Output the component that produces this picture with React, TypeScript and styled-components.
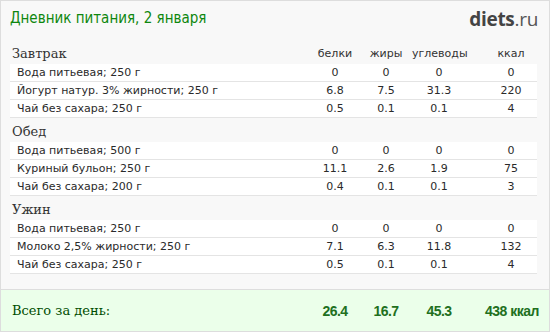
import styled, { createGlobalStyle } from 'styled-components';

const GlobalStyle = createGlobalStyle`
  body {
    margin: 0;
    background: #ffffff;
  }
`;

interface Food {
  name: string;
  protein: string;
  fat: string;
  carbs: string;
  kcal: string;
}

interface Meal {
  title: string;
  items: Food[];
}

const meals: Meal[] = [
  {
    title: 'Завтрак',
    items: [
      { name: 'Вода питьевая; 250 г', protein: '0', fat: '0', carbs: '0', kcal: '0' },
      { name: 'Йогурт натур. 3% жирности; 250 г', protein: '6.8', fat: '7.5', carbs: '31.3', kcal: '220' },
      { name: 'Чай без сахара; 250 г', protein: '0.5', fat: '0.1', carbs: '0.1', kcal: '4' },
    ],
  },
  {
    title: 'Обед',
    items: [
      { name: 'Вода питьевая; 500 г', protein: '0', fat: '0', carbs: '0', kcal: '0' },
      { name: 'Куриный бульон; 250 г', protein: '11.1', fat: '2.6', carbs: '1.9', kcal: '75' },
      { name: 'Чай без сахара; 200 г', protein: '0.4', fat: '0.1', carbs: '0.1', kcal: '3' },
    ],
  },
  {
    title: 'Ужин',
    items: [
      { name: 'Вода питьевая; 250 г', protein: '0', fat: '0', carbs: '0', kcal: '0' },
      { name: 'Молоко 2,5% жирности; 250 г', protein: '7.1', fat: '6.3', carbs: '11.8', kcal: '132' },
      { name: 'Чай без сахара; 250 г', protein: '0.5', fat: '0.1', carbs: '0.1', kcal: '4' },
    ],
  },
];

function App() {
  return (
    <>
      <GlobalStyle />
      <Diary>
        <Header>
          <Title>Дневник питания, 2 января</Title>
          <Logo>
            <b>diets</b>.ru
          </Logo>
        </Header>

        {meals.map((meal, i) => (
          <Section key={meal.title}>
            <SectionHead>
              <MealTitle>{meal.title}</MealTitle>
              {i === 0 && (
                <>
                  <ColLabel>белки</ColLabel>
                  <ColLabel>жиры</ColLabel>
                  <ColLabel>углеводы</ColLabel>
                  <ColLabel $last>ккал</ColLabel>
                </>
              )}
            </SectionHead>
            {meal.items.map((item) => (
              <Row key={item.name}>
                <FoodName>{item.name}</FoodName>
                <Value>{item.protein}</Value>
                <Value>{item.fat}</Value>
                <Value>{item.carbs}</Value>
                <Value $last>{item.kcal}</Value>
              </Row>
            ))}
          </Section>
        ))}

        <Totals>
          <TotalsInner>
            <TotalsLabel>Всего за день:</TotalsLabel>
            <TotalValue>26.4</TotalValue>
            <TotalValue>16.7</TotalValue>
            <TotalValue>45.3</TotalValue>
            <TotalValue $last>438 ккал</TotalValue>
          </TotalsInner>
        </Totals>
      </Diary>
    </>
  );
}

const columns = '1fr 50px 52px 54px 71px';

const Diary = styled.div`
  width: 550px;
  height: 332px;
  box-sizing: border-box;
  border: 1px solid #dddddd;
  background: #f8f8f8;
  display: flex;
  flex-direction: column;
  font-family: 'DejaVu Sans', Verdana, sans-serif;
`;

const Header = styled.div`
  height: 39px;
  padding: 0 11px 0 9px;
  display: flex;
  justify-content: space-between;
  align-items: flex-start;
`;

const Title = styled.div`
  margin-top: 8px;
  font-family: 'DejaVu Sans Condensed', 'DejaVu Sans', sans-serif;
  font-size: 15px;
  color: #0e870e;
`;

const Logo = styled.div`
  margin-top: 5px;
  font-family: 'Open Sans', sans-serif;
  font-size: 19px;
  color: #555555;
  letter-spacing: -0.3px;

  b {
    font-weight: 700;
    color: #444444;
  }
`;

const Section = styled.div`
  padding: 0 12px 0 9px;
`;

const SectionHead = styled.div`
  height: 24px;
  display: grid;
  grid-template-columns: ${columns};
  align-items: end;
  padding-bottom: 3px;
  box-sizing: border-box;
`;

const MealTitle = styled.div`
  padding-left: 2px;
  font-family: 'DejaVu Serif', Georgia, serif;
  font-size: 13px;
  color: #333333;
`;

const ColLabel = styled.div<{ $last?: boolean }>`
  text-align: center;
  padding-left: ${(p) => (p.$last ? '19px' : '0')};
  padding-bottom: 1px;
  font-size: 11px;
  color: #333333;
`;

const Row = styled.div`
  height: 17px;
  display: grid;
  grid-template-columns: ${columns};
  align-items: center;
  background: #ffffff;
  border-bottom: 1px solid #e4e4e4;
  font-size: 11px;
  color: #2a2a2a;
`;

const FoodName = styled.div`
  padding-left: 7px;
  white-space: nowrap;
`;

const Value = styled.div<{ $last?: boolean }>`
  text-align: center;
  padding-left: ${(p) => (p.$last ? '19px' : '0')};
`;

const Totals = styled.div`
  margin-top: auto;
  height: 42px;
  box-sizing: border-box;
  border-top: 1px solid #dddddd;
  background: #ebffea;
  padding: 0 12px 0 9px;
`;

const TotalsInner = styled.div`
  height: 100%;
  display: grid;
  grid-template-columns: ${columns};
  align-items: center;
`;

const TotalsLabel = styled.div`
  padding-left: 2px;
  font-family: 'DejaVu Serif', Georgia, serif;
  font-size: 13px;
  color: #004d00;
`;

const TotalValue = styled.div<{ $last?: boolean }>`
  text-align: center;
  padding-left: ${(p) => (p.$last ? '19px' : '0')};
  font-family: 'Liberation Sans', Arial, sans-serif;
  font-weight: 700;
  font-size: 14px;
  letter-spacing: -0.5px;
  color: #21701e;
  white-space: nowrap;
`;

export default App;
